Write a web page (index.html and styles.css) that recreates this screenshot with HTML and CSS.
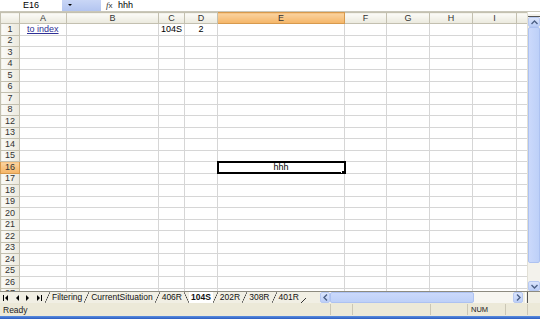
FILE: index.html
```html
<!DOCTYPE html>
<html lang="en">
<head>
  <meta charset="UTF-8">
  <title>Book1 - 104S</title>
  <link rel="stylesheet" href="styles.css">
</head>
<body>

  <div class="formula-bar">
    <div class="name-box">E16</div>
    <div class="name-drop"><span class="caret"></span></div>
    <div class="fx"><i>f</i>x</div>
    <div class="formula">hhh</div>
  </div>

  <div class="sheet">
    <div class="grid-wrap">
      <table class="grid">
        <colgroup>
          <col style="width:19px"><col style="width:47px"><col style="width:92px"><col style="width:26px">
          <col style="width:33px"><col style="width:127px"><col style="width:42px"><col style="width:43px">
          <col style="width:43px"><col style="width:44px"><col style="width:11px">
        </colgroup>
        <thead>
          <tr><th></th><th>A</th><th>B</th><th>C</th><th>D</th><th class="sel">E</th><th>F</th><th>G</th><th>H</th><th>I</th><th></th></tr>
        </thead>
        <tbody>
          <tr><th>1</th><td><a class="link" href="#index">to index</a></td><td></td><td>104S</td><td class="center">2</td><td></td><td></td><td></td><td></td><td></td><td></td></tr>
          <tr><th>2</th><td></td><td></td><td></td><td></td><td></td><td></td><td></td><td></td><td></td><td></td></tr>
          <tr><th>3</th><td></td><td></td><td></td><td></td><td></td><td></td><td></td><td></td><td></td><td></td></tr>
          <tr><th>4</th><td></td><td></td><td></td><td></td><td></td><td></td><td></td><td></td><td></td><td></td></tr>
          <tr><th>5</th><td></td><td></td><td></td><td></td><td></td><td></td><td></td><td></td><td></td><td></td></tr>
          <tr><th>6</th><td></td><td></td><td></td><td></td><td></td><td></td><td></td><td></td><td></td><td></td></tr>
          <tr><th>7</th><td></td><td></td><td></td><td></td><td></td><td></td><td></td><td></td><td></td><td></td></tr>
          <tr><th>8</th><td></td><td></td><td></td><td></td><td></td><td></td><td></td><td></td><td></td><td></td></tr>
          <tr><th>12</th><td></td><td></td><td></td><td></td><td></td><td></td><td></td><td></td><td></td><td></td></tr>
          <tr><th>13</th><td></td><td></td><td></td><td></td><td></td><td></td><td></td><td></td><td></td><td></td></tr>
          <tr><th>14</th><td></td><td></td><td></td><td></td><td></td><td></td><td></td><td></td><td></td><td></td></tr>
          <tr><th>15</th><td></td><td></td><td></td><td></td><td></td><td></td><td></td><td></td><td></td><td></td></tr>
          <tr><th class="sel">16</th><td></td><td></td><td></td><td></td><td class="active center">hhh</td><td></td><td></td><td></td><td></td><td></td></tr>
          <tr><th>17</th><td></td><td></td><td></td><td></td><td></td><td></td><td></td><td></td><td></td><td></td></tr>
          <tr><th>18</th><td></td><td></td><td></td><td></td><td></td><td></td><td></td><td></td><td></td><td></td></tr>
          <tr><th>19</th><td></td><td></td><td></td><td></td><td></td><td></td><td></td><td></td><td></td><td></td></tr>
          <tr><th>20</th><td></td><td></td><td></td><td></td><td></td><td></td><td></td><td></td><td></td><td></td></tr>
          <tr><th>21</th><td></td><td></td><td></td><td></td><td></td><td></td><td></td><td></td><td></td><td></td></tr>
          <tr><th>22</th><td></td><td></td><td></td><td></td><td></td><td></td><td></td><td></td><td></td><td></td></tr>
          <tr><th>23</th><td></td><td></td><td></td><td></td><td></td><td></td><td></td><td></td><td></td><td></td></tr>
          <tr><th>24</th><td></td><td></td><td></td><td></td><td></td><td></td><td></td><td></td><td></td><td></td></tr>
          <tr><th>25</th><td></td><td></td><td></td><td></td><td></td><td></td><td></td><td></td><td></td><td></td></tr>
          <tr><th>26</th><td></td><td></td><td></td><td></td><td></td><td></td><td></td><td></td><td></td><td></td></tr>
          <tr><th>27</th><td></td><td></td><td></td><td></td><td></td><td></td><td></td><td></td><td></td><td></td></tr>
        </tbody>
      </table>
    </div>

    <div class="vscroll">
      <div class="split-h"></div>
      <div class="sb-btn">
        <svg width="7" height="5" viewBox="0 0 7 5"><path d="M0.5 4 L3.5 1 L6.5 4" fill="none" stroke="#4d6185" stroke-width="1.4"/></svg>
      </div>
      <div class="sb-thumb"></div>
      <div class="sb-track"></div>
      <div class="sb-btn">
        <svg width="7" height="5" viewBox="0 0 7 5"><path d="M0.5 1 L3.5 4 L6.5 1" fill="none" stroke="#4d6185" stroke-width="1.4"/></svg>
      </div>
    </div>
  </div>

  <div class="tabbar">
    <div class="tab-nav">
      <svg width="5" height="6" viewBox="0 0 5 6"><rect x="0" y="0" width="1" height="6"/><path d="M5 0 L2 3 L5 6 Z"/></svg>
      <svg width="4" height="6" viewBox="0 0 4 6"><path d="M4 0 L1 3 L4 6 Z"/></svg>
      <svg width="4" height="6" viewBox="0 0 4 6"><path d="M0 0 L3 3 L0 6 Z"/></svg>
      <svg width="5" height="6" viewBox="0 0 5 6"><path d="M0 0 L3 3 L0 6 Z"/><rect x="4" y="0" width="1" height="6"/></svg>
    </div>
    <div class="tabs">
      <span class="edge fwd"></span><span class="tab">Filtering</span>
      <span class="edge fwd"></span><span class="tab">CurrentSituation</span>
      <span class="edge fwd"></span><span class="tab">406R</span>
      <span class="edge back"></span><span class="tab current">104S</span>
      <span class="edge fwd"></span><span class="tab">202R</span>
      <span class="edge fwd"></span><span class="tab">308R</span>
      <span class="edge fwd"></span><span class="tab">401R</span>
      <span class="edge fwd short"></span>
    </div>
    <div class="hscroll">
      <div class="sb-btn">
        <svg width="5" height="7" viewBox="0 0 5 7"><path d="M4 0.5 L1 3.5 L4 6.5" fill="none" stroke="#4d6185" stroke-width="1.4"/></svg>
      </div>
      <div class="sb-thumb"></div>
      <div class="sb-track"></div>
      <div class="sb-btn">
        <svg width="5" height="7" viewBox="0 0 5 7"><path d="M1 0.5 L4 3.5 L1 6.5" fill="none" stroke="#4d6185" stroke-width="1.4"/></svg>
      </div>
    </div>
    <div class="split-v"></div>
  </div>

  <div class="statusbar">
    <span class="status-text">Ready</span>
    <div class="panels">
      <span class="panel w20"></span>
      <span class="panel w78"></span>
      <span class="panel w37"></span>
      <span class="panel w38">NUM</span>
      <span class="panel w20"></span>
      <span class="panel w13"></span>
    </div>
  </div>

  <div class="taskbar"></div>

</body>
</html>
```

FILE: styles.css
```css
* {
  box-sizing: border-box;
}

html, body {
  margin: 0;
}

body {
  width: 540px;
  height: 319px;
  overflow: hidden;
  display: flex;
  flex-direction: column;
  font-family: "Liberation Sans", Arial, sans-serif;
  font-size: 9px;
  color: #000;
  background: #fff;
}

/* Formula bar */

.formula-bar {
  height: 12px;
  flex: none;
  display: flex;
  align-items: stretch;
  border-bottom: 1px solid #c9c7ba;
  background: #fff;
}

.name-box {
  width: 62px;
  text-align: center;
  line-height: 11px;
}

.name-drop {
  width: 39px;
  background: linear-gradient(#c9d6f6, #b3c5f0);
  padding: 4px 0 0 6px;
}

.caret {
  display: block;
  width: 0;
  height: 0;
  border-left: 2px solid transparent;
  border-right: 2px solid transparent;
  border-top: 2px solid #000;
}

.fx {
  width: 16px;
  padding-left: 5px;
  line-height: 11px;
  font-size: 8px;
  color: #333;
}

.fx i {
  font-family: "Liberation Serif", serif;
  font-size: 9px;
}

.formula {
  line-height: 11px;
  padding-left: 1px;
}

/* Sheet grid */

.sheet {
  height: 279px;
  flex: none;
  display: flex;
}

.grid-wrap {
  width: 527px;
  overflow: hidden;
}

.grid {
  border-collapse: collapse;
  table-layout: fixed;
  width: 527px;
}

.grid th,
.grid td {
  height: 11.5px;
  padding: 0 2px;
  border: 1px solid #d6d6d6;
  line-height: 9px;
  white-space: nowrap;
  overflow: hidden;
  font-weight: normal;
}

.grid thead th {
  height: 11px;
  text-align: center;
  color: #333;
  background: linear-gradient(#fbfbf8, #ebe9dd);
  border-color: #c3c0b0;
}

.grid tbody th {
  text-align: center;
  color: #333;
  background: linear-gradient(90deg, #fbfbf8, #ebe9dd);
  border-color: #c3c0b0;
}

.grid th.sel {
  background: linear-gradient(#fad3a0, #f5b566);
  border-color: #d79a4e;
}

.center {
  text-align: center;
}

.link,
.link:visited {
  color: #2f2f96;
  text-decoration: underline;
  padding-left: 5px;
}

.active {
  position: relative;
  outline: 2px solid #000;
  outline-offset: -1px;
}

.active::after {
  content: "";
  position: absolute;
  right: -3px;
  bottom: -3px;
  width: 4px;
  height: 4px;
  background: #000;
  border: 1px solid #fff;
}

/* Scrollbars */

.vscroll {
  width: 13px;
  display: flex;
  flex-direction: column;
  background: #f3f2ec;
  border-left: 1px solid #e2e0d6;
}

.split-h {
  height: 5px;
  border-top: 2px solid #fff;
  border-bottom: 1px solid #555;
}

.sb-btn {
  flex: none;
  display: flex;
  align-items: center;
  justify-content: center;
  background: linear-gradient(#dbe5fc, #bccff8);
  border: 1px solid #b7c9f2;
  border-radius: 2px;
}

.vscroll .sb-btn {
  height: 10px;
}

.vscroll .sb-thumb {
  height: 236px;
  flex: none;
  background: linear-gradient(90deg, #cbd9fb, #bdd0f8);
  border: 1px solid #adc2f1;
  border-radius: 2px;
}

.sb-track {
  flex: 1;
}

/* Sheet tabs */

.tabbar {
  height: 12px;
  flex: none;
  display: flex;
  align-items: stretch;
  background: #f1efe4;
  border-top: 1px solid #8d8b80;
}

.tab-nav {
  width: 45px;
  flex: none;
  display: flex;
  align-items: center;
  gap: 7px;
  padding-left: 3px;
}

.tabs {
  width: 275px;
  flex: none;
  display: flex;
  align-items: stretch;
  font-size: 8.5px;
  line-height: 10px;
  color: #111;
}

.tab {
  padding: 0 2px;
}

.tab.current {
  background: #fff;
  font-weight: bold;
}

.edge {
  width: 5px;
  flex: none;
}

.edge.fwd {
  background: linear-gradient(to bottom right, transparent calc(50% - 0.6px), #333 50%, transparent calc(50% + 0.6px));
}

.edge.back {
  background: linear-gradient(to top right, transparent calc(50% - 0.6px), #333 50%, transparent calc(50% + 0.6px));
}

.edge.short {
  height: 5px;
  align-self: flex-end;
}

.hscroll {
  width: 203px;
  flex: none;
  display: flex;
  align-items: stretch;
  background: #f7f6f1;
}

.hscroll .sb-btn {
  width: 10px;
}

.hscroll .sb-thumb {
  width: 144px;
  flex: none;
  background: linear-gradient(#cbd9fb, #bdd0f8);
  border: 1px solid #adc2f1;
  border-radius: 2px;
}

.split-v {
  width: 3px;
  margin-left: 2px;
  border-left: 1px solid #fff;
  border-right: 1px solid #555;
}

/* Status bar */

.statusbar {
  height: 13px;
  flex: none;
  display: flex;
  align-items: stretch;
  background: #ece9d8;
}

.status-text {
  flex: 1;
  padding-left: 3px;
  line-height: 14px;
  font-size: 8.5px;
  color: #222;
}

.panels {
  display: flex;
  padding: 1px 0;
}

.panel {
  margin-left: 2px;
  border-left: 1px solid #cbc7b6;
  font-size: 7.5px;
  line-height: 11px;
  color: #222;
}

.w20 { width: 20px; }
.w78 { width: 76px; }
.w37 { width: 35px; }
.w38 { width: 36px; padding-left: 3px; }
.w13 { width: 13px; }

.taskbar {
  height: 3px;
  flex: none;
  background: linear-gradient(#5b8ee0, #2a5cc0);
}
```
